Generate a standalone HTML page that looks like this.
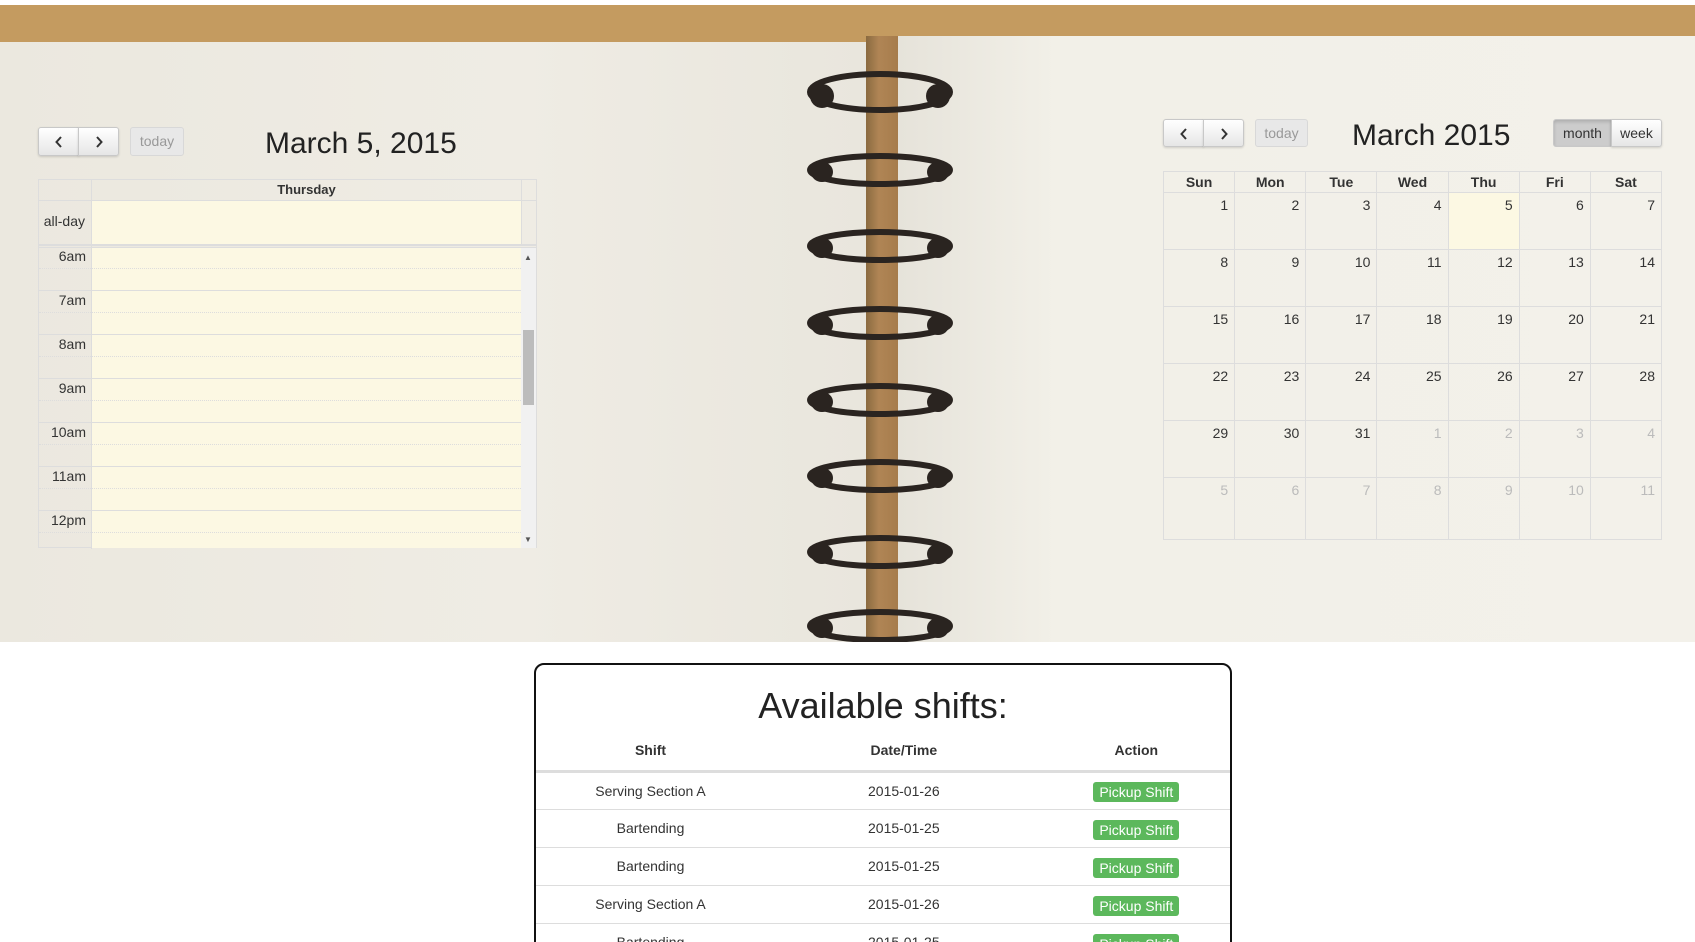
<!DOCTYPE html>
<html style="height:942px;overflow:hidden"><head><meta charset="utf-8"><style>
*{box-sizing:border-box}
html{width:1695px;height:942px;overflow:hidden}
body{margin:0;width:1695px;height:942px;overflow:hidden;background:#fff;font-family:"Liberation Sans",Arial,sans-serif;color:#333;position:relative}
.abs{position:absolute}
.bg{left:0;top:0;width:1695px;height:642px;background:#f0ede5;overflow:hidden}
.btn{position:absolute;border:1px solid #c8c8c8;border-radius:3px;background:linear-gradient(#fff,#e6e6e6);box-shadow:0 1px 2px rgba(0,0,0,.15);font-size:14px;color:#333;text-align:center}
.btn svg{margin-top:8px}
.dis{background:#e8e8e8;color:#999;box-shadow:none;border-color:#d8d8d8}
table{border-collapse:collapse}
.mc td,.mc th{border:1px solid #ddd;width:71.3px;padding:0}
.mc th{height:21px;font-size:14px;font-weight:bold;text-align:center;color:#333}
.mc td{height:57px;vertical-align:top;text-align:right;font-size:14px;padding:4px 6px 0 0}
.mc td.o{color:#bbb}
.clip{left:0;top:642px;width:1695px;height:300px;overflow:hidden}
.sh{left:534px;top:21px;width:698px;height:400px;border:2px solid #111;border-radius:10px;background:#fff}
.sh table{width:100%;font-size:14px;text-align:center}
.sh th{height:40px;font-weight:bold;border-bottom:3px solid #ddd}
.sh td{height:38px;border-bottom:1px solid #ddd}
.pk{display:inline-block;background:#5cb85c;color:#fff;border-radius:3px;padding:2px 6px;font-size:14px;margin-top:3px}
</style></head><body>
<div class="abs bg">
  <div class="abs" style="left:0;top:0;width:1695px;height:5px;background:#fff"></div>
  <div class="abs" style="left:0;top:5px;width:1695px;height:37px;background:#c49b60"></div>
  <div class="abs" style="left:900px;top:5px;width:795px;height:32px;background:#c49b60"></div>
  <div class="abs" style="left:0;top:42px;width:866px;height:600px;background:linear-gradient(90deg,#ebe8df,#efece4 60%,#e9e6dd)"></div>
  <div class="abs" style="left:898px;top:36px;width:797px;height:606px;background:linear-gradient(90deg,#e6e3da,#f2f0e8 20%,#f3f1ea)"></div>
  <div class="abs" style="left:866px;top:36px;width:32px;height:606px;background:linear-gradient(90deg,#8a6a40,#b08555 40%,#a67c4c)"></div>
  <svg class="abs" style="left:0;top:0" width="1695" height="642">
    <g fill="none" stroke="#2a2420" stroke-width="6">
      <ellipse cx="880" cy="92" rx="70" ry="18"/>
      <ellipse cx="880" cy="170" rx="70" ry="14"/>
      <ellipse cx="880" cy="246" rx="70" ry="14"/>
      <ellipse cx="880" cy="323" rx="70" ry="14"/>
      <ellipse cx="880" cy="400" rx="70" ry="14"/>
      <ellipse cx="880" cy="476" rx="70" ry="14"/>
      <ellipse cx="880" cy="552" rx="70" ry="14"/>
      <ellipse cx="880" cy="626" rx="70" ry="14"/>
    </g>
    <g fill="#2a2420">
      <ellipse cx="822" cy="96" rx="12" ry="12"/><ellipse cx="938" cy="96" rx="12" ry="12"/>
      <ellipse cx="822" cy="172" rx="11" ry="10"/><ellipse cx="938" cy="172" rx="11" ry="10"/>
      <ellipse cx="822" cy="248" rx="11" ry="10"/><ellipse cx="938" cy="248" rx="11" ry="10"/>
      <ellipse cx="822" cy="325" rx="11" ry="10"/><ellipse cx="938" cy="325" rx="11" ry="10"/>
      <ellipse cx="822" cy="402" rx="11" ry="10"/><ellipse cx="938" cy="402" rx="11" ry="10"/>
      <ellipse cx="822" cy="478" rx="11" ry="10"/><ellipse cx="938" cy="478" rx="11" ry="10"/>
      <ellipse cx="822" cy="554" rx="11" ry="10"/><ellipse cx="938" cy="554" rx="11" ry="10"/>
      <ellipse cx="822" cy="628" rx="11" ry="10"/><ellipse cx="938" cy="628" rx="11" ry="10"/>
    </g>
  </svg>

  <!-- left calendar -->
  <div class="btn" style="left:38px;top:127px;width:41px;height:29px;border-radius:3px 0 0 3px"><svg width="8" height="12"><path d="M6 1L1.5 6L6 11" fill="none" stroke="#333" stroke-width="2"/></svg></div>
  <div class="btn" style="left:78px;top:127px;width:41px;height:29px;border-radius:0 3px 3px 0"><svg width="8" height="12"><path d="M2 1L6.5 6L2 11" fill="none" stroke="#333" stroke-width="2"/></svg></div>
  <div class="btn dis" style="left:130px;top:127px;width:54px;height:29px;line-height:27px">today</div>
  <div class="abs" style="left:265px;top:127px;font-size:30px;color:#222">March 5, 2015</div>
  <div class="abs" style="left:38px;top:179px;width:499px;height:369px;border:1px solid #ddd">
    <div class="abs" style="left:52px;top:0;width:1px;height:369px;background:#ddd"></div>
    <div class="abs" style="left:53px;top:0;width:429px;height:21px;border-bottom:1px solid #ddd;text-align:center;font-size:13px;font-weight:bold;line-height:20px">Thursday</div>
    <div class="abs" style="left:0;top:20px;width:497px;height:1px;background:#ddd"></div>
    <div class="abs" style="left:53px;top:21px;width:429px;height:43px;background:#fcf8e3"></div>
    <div class="abs" style="left:482px;top:0;width:1px;height:64px;background:#ddd"></div>
    <div class="abs" style="left:0;top:33px;width:46px;text-align:right;font-size:14px">all-day</div>
    <div class="abs" style="left:0;top:64px;width:497px;height:4px;border-top:2px solid #ddd;border-bottom:1px solid #ddd"></div>
    <div class="abs" style="left:53px;top:68px;width:429px;height:300px;background:#fcf8e3"></div>
    <div class="abs" style="left:482px;top:68px;width:15px;height:300px;background:#f1f1f1"></div>
    <div class="abs" style="left:484px;top:150px;width:11px;height:75px;background:#bcbcbc"></div>
    <div class="abs" style="left:485px;top:73px;font-size:8px;color:#555">&#9650;</div>
    <div class="abs" style="left:485px;top:355px;font-size:8px;color:#555">&#9660;</div>
    <div class="abs" style="left:0;top:66px;width:482px">
      <div style="position:relative;height:44px"><span class="abs" style="right:435px;top:2px;font-size:14px">6am</span><div class="abs" style="left:0;top:22px;width:482px;border-top:1px dotted #ddd"></div><div class="abs" style="left:0;top:44px;width:482px;border-top:1px solid #ddd"></div></div>
      <div style="position:relative;height:44px"><span class="abs" style="right:435px;top:2px;font-size:14px">7am</span><div class="abs" style="left:0;top:22px;width:482px;border-top:1px dotted #ddd"></div><div class="abs" style="left:0;top:44px;width:482px;border-top:1px solid #ddd"></div></div>
      <div style="position:relative;height:44px"><span class="abs" style="right:435px;top:2px;font-size:14px">8am</span><div class="abs" style="left:0;top:22px;width:482px;border-top:1px dotted #ddd"></div><div class="abs" style="left:0;top:44px;width:482px;border-top:1px solid #ddd"></div></div>
      <div style="position:relative;height:44px"><span class="abs" style="right:435px;top:2px;font-size:14px">9am</span><div class="abs" style="left:0;top:22px;width:482px;border-top:1px dotted #ddd"></div><div class="abs" style="left:0;top:44px;width:482px;border-top:1px solid #ddd"></div></div>
      <div style="position:relative;height:44px"><span class="abs" style="right:435px;top:2px;font-size:14px">10am</span><div class="abs" style="left:0;top:22px;width:482px;border-top:1px dotted #ddd"></div><div class="abs" style="left:0;top:44px;width:482px;border-top:1px solid #ddd"></div></div>
      <div style="position:relative;height:44px"><span class="abs" style="right:435px;top:2px;font-size:14px">11am</span><div class="abs" style="left:0;top:22px;width:482px;border-top:1px dotted #ddd"></div><div class="abs" style="left:0;top:44px;width:482px;border-top:1px solid #ddd"></div></div>
      <div style="position:relative;height:36px"><span class="abs" style="right:435px;top:2px;font-size:14px">12pm</span><div class="abs" style="left:0;top:22px;width:482px;border-top:1px dotted #ddd"></div></div>
    </div>
  </div>

  <!-- right calendar -->
  <div class="btn" style="left:1163px;top:119px;width:41px;height:28px;border-radius:3px 0 0 3px"><svg width="8" height="12"><path d="M6 1L1.5 6L6 11" fill="none" stroke="#333" stroke-width="2"/></svg></div>
  <div class="btn" style="left:1203px;top:119px;width:41px;height:28px;border-radius:0 3px 3px 0"><svg width="8" height="12"><path d="M2 1L6.5 6L2 11" fill="none" stroke="#333" stroke-width="2"/></svg></div>
  <div class="btn dis" style="left:1255px;top:119px;width:53px;height:28px;line-height:26px">today</div>
  <div class="abs" style="left:1352px;top:119px;font-size:30px;color:#222">March 2015</div>
  <div class="btn" style="left:1553px;top:119px;width:59px;height:28px;line-height:26px;border-radius:3px 0 0 3px;background:#ccc;box-shadow:inset 0 2px 3px rgba(0,0,0,.15)">month</div>
  <div class="btn" style="left:1611px;top:119px;width:51px;height:28px;line-height:26px;border-radius:0 3px 3px 0">week</div>
  <table class="mc abs" style="left:1163px;top:171px;width:499px">
    <tr><th>Sun</th><th>Mon</th><th>Tue</th><th>Wed</th><th>Thu</th><th>Fri</th><th>Sat</th></tr>
    <tr><td>1</td><td>2</td><td>3</td><td>4</td><td style="background:#fcf8e3">5</td><td>6</td><td>7</td></tr>
    <tr><td>8</td><td>9</td><td>10</td><td>11</td><td>12</td><td>13</td><td>14</td></tr>
    <tr><td>15</td><td>16</td><td>17</td><td>18</td><td>19</td><td>20</td><td>21</td></tr>
    <tr><td>22</td><td>23</td><td>24</td><td>25</td><td>26</td><td>27</td><td>28</td></tr>
    <tr><td>29</td><td>30</td><td>31</td><td class="o">1</td><td class="o">2</td><td class="o">3</td><td class="o">4</td></tr>
    <tr><td class="o" style="height:62px">5</td><td class="o">6</td><td class="o">7</td><td class="o">8</td><td class="o">9</td><td class="o">10</td><td class="o">11</td></tr>
  </table>
</div>

<div class="abs clip">
<div class="abs sh">
  <div style="text-align:center;font-size:36px;color:#222;margin-top:20px;height:46px">Available shifts:</div>
  <table>
    <tr><th style="width:33%">Shift</th><th style="width:40%">Date/Time</th><th>Action</th></tr>
    <tr><td>Serving Section A</td><td>2015-01-26</td><td><span class="pk">Pickup Shift</span></td></tr>
    <tr><td>Bartending</td><td>2015-01-25</td><td><span class="pk">Pickup Shift</span></td></tr>
    <tr><td>Bartending</td><td>2015-01-25</td><td><span class="pk">Pickup Shift</span></td></tr>
    <tr><td>Serving Section A</td><td>2015-01-26</td><td><span class="pk">Pickup Shift</span></td></tr>
    <tr><td>Bartending</td><td>2015-01-25</td><td><span class="pk">Pickup Shift</span></td></tr>
    <tr><td>Bartending</td><td>2015-01-25</td><td><span class="pk">Pickup Shift</span></td></tr>
  </table>
</div>
</div>
</body></html>
